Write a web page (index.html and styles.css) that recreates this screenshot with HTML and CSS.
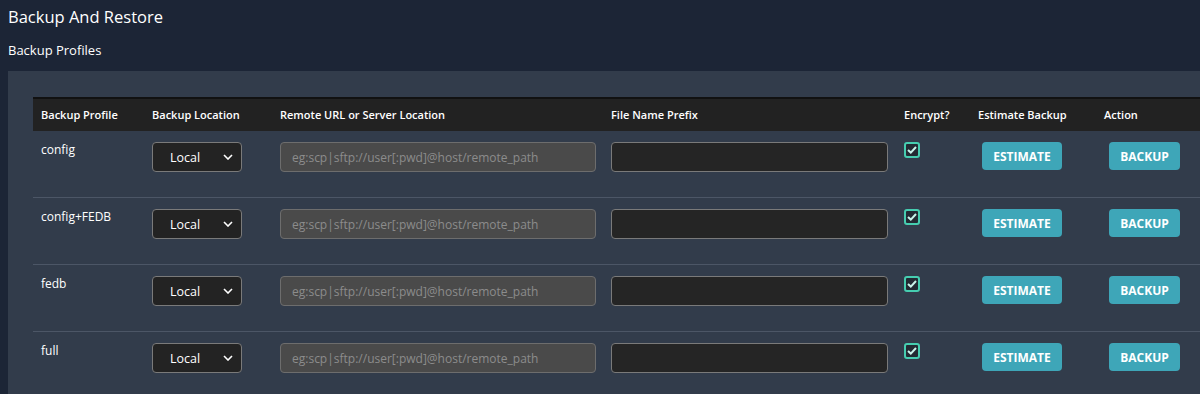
FILE: index.html
```html
<!DOCTYPE html>
<html lang="en">
  <head>
    <meta charset="UTF-8" />
    <meta name="viewport" content="width=device-width, initial-scale=1.0" />
    <title>Backup And Restore</title>
    <link rel="stylesheet" href="styles.css">
  </head>
  <body>
    <h1 class="page-title">Backup And Restore</h1>
    <h2 class="section-title">Backup Profiles</h2>

    <div class="panel">
      <table class="profiles">
        <thead>
          <tr>
            <th class="col-profile">Backup Profile</th>
            <th class="col-location">Backup Location</th>
            <th class="col-remote">Remote URL or Server Location</th>
            <th class="col-prefix">File Name Prefix</th>
            <th class="col-encrypt">Encrypt?</th>
            <th class="col-estimate">Estimate Backup</th>
            <th class="col-action">Action</th>
          </tr>
        </thead>
        <tbody>
          <tr>
            <td>config</td>
            <td>
              <div class="select-wrap">
                <select class="location"><option>Local</option><option>Remote</option></select>
                <svg class="chevron" width="10" height="6" viewBox="0 0 10 6"><path d="M1 1l4 4 4-4" fill="none" stroke="#fff" stroke-width="1.6"/></svg>
              </div>
            </td>
            <td><input type="text" class="remote" placeholder="eg:scp|sftp://user[:pwd]@host/remote_path" disabled /></td>
            <td><input type="text" class="prefix" /></td>
            <td>
              <span class="check">
                <svg width="10" height="8" viewBox="0 0 10 8"><path d="M1 4l2.8 2.6L9 1" fill="none" stroke="#c9f3ea" stroke-width="2"/></svg>
              </span>
            </td>
            <td><button class="btn btn-estimate">Estimate</button></td>
            <td><button class="btn btn-backup">Backup</button></td>
          </tr>
          <tr>
            <td>config+FEDB</td>
            <td>
              <div class="select-wrap">
                <select class="location"><option>Local</option><option>Remote</option></select>
                <svg class="chevron" width="10" height="6" viewBox="0 0 10 6"><path d="M1 1l4 4 4-4" fill="none" stroke="#fff" stroke-width="1.6"/></svg>
              </div>
            </td>
            <td><input type="text" class="remote" placeholder="eg:scp|sftp://user[:pwd]@host/remote_path" disabled /></td>
            <td><input type="text" class="prefix" /></td>
            <td>
              <span class="check">
                <svg width="10" height="8" viewBox="0 0 10 8"><path d="M1 4l2.8 2.6L9 1" fill="none" stroke="#c9f3ea" stroke-width="2"/></svg>
              </span>
            </td>
            <td><button class="btn btn-estimate">Estimate</button></td>
            <td><button class="btn btn-backup">Backup</button></td>
          </tr>
          <tr>
            <td>fedb</td>
            <td>
              <div class="select-wrap">
                <select class="location"><option>Local</option><option>Remote</option></select>
                <svg class="chevron" width="10" height="6" viewBox="0 0 10 6"><path d="M1 1l4 4 4-4" fill="none" stroke="#fff" stroke-width="1.6"/></svg>
              </div>
            </td>
            <td><input type="text" class="remote" placeholder="eg:scp|sftp://user[:pwd]@host/remote_path" disabled /></td>
            <td><input type="text" class="prefix" /></td>
            <td>
              <span class="check">
                <svg width="10" height="8" viewBox="0 0 10 8"><path d="M1 4l2.8 2.6L9 1" fill="none" stroke="#c9f3ea" stroke-width="2"/></svg>
              </span>
            </td>
            <td><button class="btn btn-estimate">Estimate</button></td>
            <td><button class="btn btn-backup">Backup</button></td>
          </tr>
          <tr>
            <td>full</td>
            <td>
              <div class="select-wrap">
                <select class="location"><option>Local</option><option>Remote</option></select>
                <svg class="chevron" width="10" height="6" viewBox="0 0 10 6"><path d="M1 1l4 4 4-4" fill="none" stroke="#fff" stroke-width="1.6"/></svg>
              </div>
            </td>
            <td><input type="text" class="remote" placeholder="eg:scp|sftp://user[:pwd]@host/remote_path" disabled /></td>
            <td><input type="text" class="prefix" /></td>
            <td>
              <span class="check">
                <svg width="10" height="8" viewBox="0 0 10 8"><path d="M1 4l2.8 2.6L9 1" fill="none" stroke="#c9f3ea" stroke-width="2"/></svg>
              </span>
            </td>
            <td><button class="btn btn-estimate">Estimate</button></td>
            <td><button class="btn btn-backup">Backup</button></td>
          </tr>
        </tbody>
      </table>
    </div>
  </body>
</html>
```

FILE: styles.css
```css
html {
  overflow: hidden;
}

body {
  margin: 0;
  padding: 0 0 0 8px;
  background-color: #1c2536;
  color: #ffffff;
  font-family: "Open Sans", "Noto Sans", sans-serif;
}

.page-title {
  margin: 0;
  padding-top: 5px;
  font-size: 16.5px;
  font-weight: 400;
  line-height: 24px;
}

.section-title {
  margin: 0;
  padding-top: 12px;
  font-size: 13px;
  font-weight: 400;
  line-height: 18px;
}

.panel {
  margin-top: 12px;
  background-color: #323c4b;
  padding: 26px 0 20px 25px;
}

.profiles {
  border-collapse: collapse;
  table-layout: fixed;
  width: 1167px;
}

.profiles th {
  background-color: #222222;
  border-top: 2px solid #111111;
  font-size: 11px;
  font-weight: 600;
  text-align: left;
  padding: 0 8px 2px;
  height: 30px;
}

/* widths are content widths, cells add 16px padding */
.col-profile { width: 95px; }
.col-location { width: 112px; }
.col-remote { width: 315px; }
.col-prefix { width: 277px; }
.col-encrypt { width: 58px; }
.col-estimate { width: 110px; }
.col-action { width: 88px; }

.profiles td {
  font-size: 12px;
  vertical-align: top;
  padding: 11px 8px 25px;
  line-height: 16px;
  border-top: 1px solid #4c5666;
}

.profiles tbody tr:first-child td {
  border-top: none;
}

.select-wrap {
  position: relative;
  width: 90px;
}

.location {
  appearance: none;
  -webkit-appearance: none;
  width: 90px;
  height: 30px;
  background-color: #232323;
  border: 1.5px solid #7a7a7a;
  border-radius: 4px;
  color: #ffffff;
  font-family: "Open Sans", "Noto Sans", sans-serif;
  font-size: 12.5px;
  padding: 0 0 0 17px;
}

.chevron {
  position: absolute;
  right: 9px;
  top: 12px;
  pointer-events: none;
}

.remote,
.prefix {
  box-sizing: border-box;
  height: 30px;
  border: 1.5px solid #7a7a7a;
  border-radius: 4px;
  font-family: "Open Sans", "Noto Sans", sans-serif;
  font-size: 12px;
  padding: 0 11px;
  color: #ffffff;
}

.remote {
  width: 316px;
  background-color: #4a4a4a;
  border-color: #6d6d6d;
}

.remote::placeholder {
  color: #8c8c8c;
}

.prefix {
  width: 277px;
  background-color: #252525;
}

.check {
  display: inline-flex;
  align-items: center;
  justify-content: center;
  box-sizing: border-box;
  width: 16px;
  height: 16px;
  border: 2px solid #46cdb0;
  border-radius: 3px;
  background-color: #232a33;
}

.btn {
  height: 28px;
  border: none;
  border-radius: 4px;
  background-color: #3ea6b8;
  color: #ffffff;
  font-family: "Open Sans", "Noto Sans", sans-serif;
  font-size: 12px;
  font-weight: 700;
  text-transform: uppercase;
  padding: 0;
}

.btn-estimate {
  width: 80px;
  margin-left: 4px;
}

.btn-backup {
  width: 71px;
  margin-left: 5px;
}
```
